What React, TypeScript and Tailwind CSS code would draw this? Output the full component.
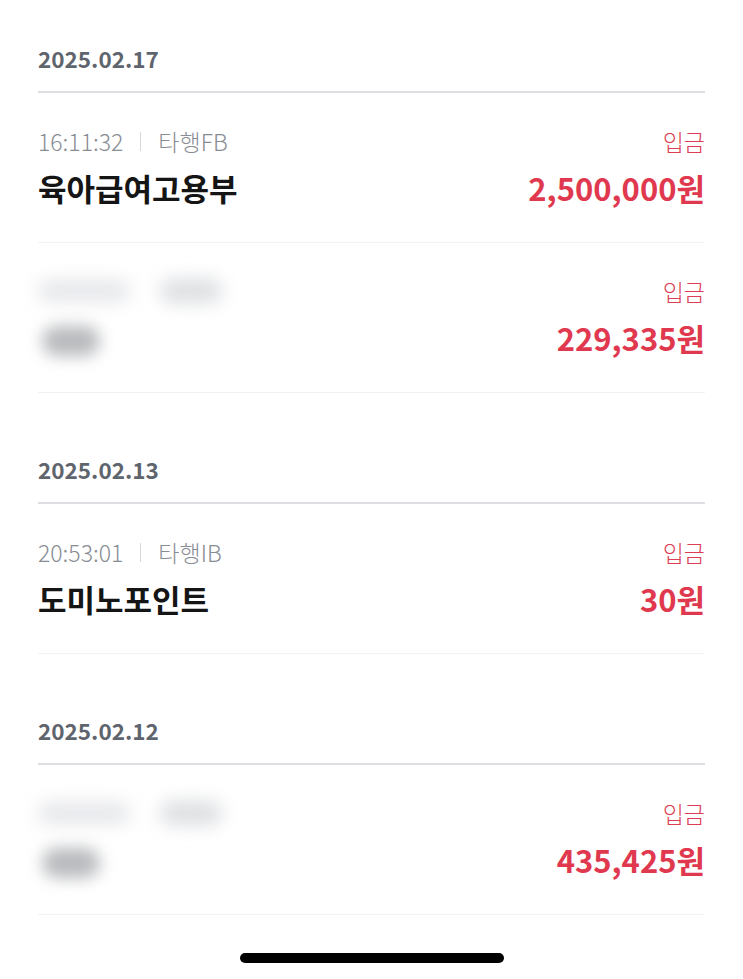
const font = { fontFamily: '"Noto Sans CJK KR", "Noto Sans", sans-serif' };

type Item = { time?: string; bank?: string; name?: string; amount: string };

const sections: { date: string; items: Item[] }[] = [
  {
    date: "2025.02.17",
    items: [
      { time: "16:11:32", bank: "타행FB", name: "육아급여고용부", amount: "2,500,000원" },
      { amount: "229,335원" },
    ],
  },
  {
    date: "2025.02.13",
    items: [{ time: "20:53:01", bank: "타행IB", name: "도미노포인트", amount: "30원" }],
  },
  {
    date: "2025.02.12",
    items: [{ amount: "435,425원" }],
  },
];

const Blurred = () => (
  <div className="flex flex-col gap-[20px]">
    <div className="flex items-center gap-[30px] h-[30px]">
      <div className="w-[92px] h-[22px] rounded-full bg-[#e6e7ea] blur-[9px]" />
      <div className="w-[62px] h-[24px] rounded-full bg-[#dcdee1] blur-[9px]" />
    </div>
    <div className="w-[58px] h-[30px] rounded-full bg-[#b8babd] blur-[8px] ml-[4px]" />
  </div>
);

const Row = ({ item }: { item: Item }) => (
  <div className="h-[150px] border-b-[1.5px] border-[#f1f2f4] flex justify-between pt-[33px]">
    {item.name ? (
      <div className="flex flex-col">
        <div className="flex items-center h-[30px] text-[23px] font-light text-[#888c93]">
          <span>{item.time}</span>
          <span className="mx-[17px] w-px h-[19px] bg-[#d6d8dc]" />
          <span>{item.bank}</span>
        </div>
        <div className="mt-[14px] h-[36px] flex items-center text-[31px] font-bold text-[#151515]">
          {item.name}
        </div>
      </div>
    ) : (
      <Blurred />
    )}
    <div className="flex flex-col items-end">
      <div className="h-[30px] flex items-center text-[23px] font-light text-[#dc3f55]">입금</div>
      <div className="mt-[14px] h-[36px] flex items-center text-[31px] font-bold text-[#e0394f]">
        {item.amount}
      </div>
    </div>
  </div>
);

export default function App() {
  return (
    <div className="w-[743px] h-[979px] bg-white relative overflow-hidden" style={font}>
      <div className="px-[38px]">
        {sections.map((s, i) => (
          <div key={s.date} className={i === 0 ? "" : "mt-[18px]"}>
            <div className="h-[93px] border-b-2 border-[#dcdee2] flex items-end pb-[20px]">
              <span className="text-[22.5px] font-bold text-[#5f656d] leading-[26px]">{s.date}</span>
            </div>
            {s.items.map((it, j) => (
              <Row key={j} item={it} />
            ))}
          </div>
        ))}
      </div>
      <div className="absolute left-[240px] top-[953px] w-[264px] h-[10px] rounded-full bg-black" />
    </div>
  );
}
